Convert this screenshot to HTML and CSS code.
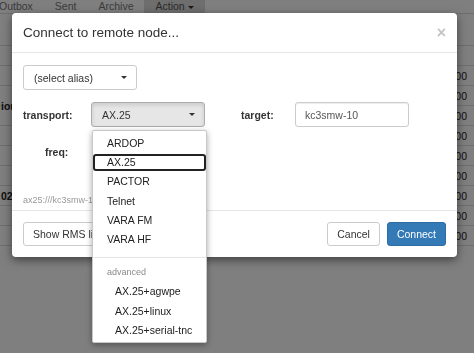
FILE: index.html
```html
<!DOCTYPE html>
<html lang="en">
<head>
    <meta charset="UTF-8">
    <meta name="viewport" content="width=device-width, initial-scale=1.0">
    <title>Connect to remote node</title>
    <link rel="stylesheet" href="styles.css">
</head>

<body>
    <div class="page">
        <ul class="tabs">
            <li>Outbox</li>
            <li>Sent</li>
            <li>Archive</li>
            <li class="active">Action <span class="caret"></span></li>
        </ul>

        <div class="rows">
            <div class="row"><span></span><span></span></div>
            <div class="row"><span></span><span></span></div>
            <div class="row"><span></span><span>0000</span></div>
            <div class="row"><span></span><span>0000</span></div>
            <div class="row"><span class="up">ion</span><span>0000</span></div>
            <div class="row"><span></span><span>0000</span></div>
            <div class="row"><span></span><span>0000</span></div>
            <div class="row"><span></span><span>0000</span></div>
            <div class="row"><span>022</span><span>0000</span></div>
            <div class="row"><span></span><span>0000</span></div>
            <div class="row"><span></span><span>0000</span></div>
        </div>
    </div>

    <div class="backdrop"></div>

    <div class="modal">
        <div class="modal-header">
            <h4>Connect to remote node...</h4>
            <button type="button" class="close">&times;</button>
        </div>

        <div class="modal-body">
            <div class="form-row">
                <button type="button" class="picker">(select alias) <span class="caret"></span></button>
            </div>

            <div class="form-row">
                <label class="lbl lbl-transport">transport:</label>
                <button type="button" class="picker open">AX.25 <span class="caret"></span></button>
                <label class="lbl lbl-target">target:</label>
                <input type="text" class="field" value="kc3smw-10">
            </div>

            <div class="form-row">
                <label class="lbl lbl-freq">freq:</label>
            </div>

            <p class="help">ax25:///kc3smw-10</p>
        </div>

        <div class="modal-footer">
            <button type="button" class="btn">Show RMS list</button>
            <span class="spacer"></span>
            <button type="button" class="btn">Cancel</button>
            <button type="button" class="btn btn-primary">Connect</button>
        </div>
    </div>

    <ul class="popup">
        <li>ARDOP</li>
        <li class="focused">AX.25</li>
        <li>PACTOR</li>
        <li>Telnet</li>
        <li>VARA FM</li>
        <li>VARA HF</li>
        <li class="divider"></li>
        <li class="group">advanced</li>
        <li class="sub">AX.25+agwpe</li>
        <li class="sub">AX.25+linux</li>
        <li class="sub">AX.25+serial-tnc</li>
    </ul>
</body>
</html>
```

FILE: styles.css
```css
* {
    box-sizing: border-box;
}

body {
    margin: 0;
    font-family: "Liberation Sans", Arial, sans-serif;
    font-size: 10.5px;
    color: #333;
    background: #fff;
    overflow: hidden;
}

/* page behind the dialog */

.tabs {
    display: flex;
    margin: 0 0 0 -12px;
    padding: 0;
    list-style: none;
    height: 14px;
    border-bottom: 1px solid #ddd;
}

.tabs li {
    padding: 1px 11px 3px;
    line-height: 10px;
    color: #777;
}

.tabs li.active {
    background: #dcdcdc;
    color: #555;
}

.rows {
    margin-top: 12px;
}

.row {
    display: flex;
    justify-content: space-between;
    height: 20px;
    line-height: 20px;
    padding: 0 7px 0 1px;
    border-bottom: 1px solid #ddd;
    color: #222;
}

.row span:first-child {
    font-weight: bold;
}

.row span.up {
    align-self: flex-start;
    line-height: 12px;
    margin-top: -6px;
}

.caret {
    display: inline-block;
    width: 0;
    height: 0;
    border-top: 3px solid #333;
    border-left: 3px solid transparent;
    border-right: 3px solid transparent;
    vertical-align: middle;
}

.backdrop {
    position: fixed;
    inset: 0;
    background: rgba(0, 0, 0, 0.5);
}

/* dialog */

.modal {
    position: absolute;
    left: 12px;
    top: 13px;
    width: 445px;
    background: #fff;
    border-radius: 4px;
    box-shadow: 0 3px 10px rgba(0, 0, 0, 0.5);
}

.modal-header {
    display: flex;
    align-items: center;
    justify-content: space-between;
    padding: 10px 11px;
    border-bottom: 1px solid #e5e5e5;
}

.modal-header h4 {
    margin: 0;
    font-size: 13.5px;
    font-weight: normal;
    line-height: 19px;
}

.close {
    padding: 0;
    margin-right: 0;
    border: 0;
    background: none;
    font-family: inherit;
    font-size: 16px;
    font-weight: bold;
    line-height: 1;
    color: #c4c4c4;
}

.modal-body {
    padding: 12px 11px 2.5px;
}

.form-row {
    display: flex;
    align-items: center;
    height: 25px;
    margin-bottom: 12px;
}

.picker {
    display: flex;
    align-items: center;
    justify-content: space-between;
    width: 114px;
    height: 25px;
    padding: 0 9px 0 10px;
    border: 1px solid #ccc;
    border-radius: 3px;
    background: #fff;
    font-family: inherit;
    font-size: 10.5px;
    color: #333;
}

.picker.open {
    background: #e6e6e6;
    border-color: #adadad;
    box-shadow: inset 0 2px 4px rgba(0, 0, 0, 0.125);
}

.lbl {
    font-weight: bold;
}

.lbl-transport {
    width: 68px;
}

.lbl-target {
    width: 54px;
    margin-left: 36px;
}

.lbl-freq {
    padding-left: 22px;
}

.field {
    width: 114px;
    height: 25px;
    padding: 0 9px;
    border: 1px solid #ccc;
    border-radius: 3px;
    box-shadow: inset 0 1px 1px rgba(0, 0, 0, 0.075);
    font-family: inherit;
    font-size: 10.5px;
    color: #555;
}

.help {
    margin: 30px 0 0;
    font-size: 9px;
    line-height: 13px;
    color: #999;
}

.modal-footer {
    display: flex;
    align-items: center;
    gap: 7px;
    padding: 11px 11px 11px;
    border-top: 1px solid #e5e5e5;
}

.spacer {
    flex: 1;
}

.btn {
    height: 24px;
    padding: 0 9px;
    border: 1px solid #ccc;
    border-radius: 3px;
    background: #fff;
    font-family: inherit;
    font-size: 10.5px;
    color: #333;
}

.btn-primary {
    background: #337ab7;
    border-color: #2e6da4;
    color: #fff;
}

/* open select list */

.popup {
    position: absolute;
    left: 92px;
    top: 130px;
    width: 115px;
    margin: 0;
    padding: 2.5px 0 2px;
    list-style: none;
    background: #fff;
    border: 1px solid #c8c8c8;
    border-radius: 2px;
    box-shadow: 0 2px 6px rgba(0, 0, 0, 0.35);
    font-size: 10.5px;
    color: #222;
}

.popup li {
    height: 19.4px;
    line-height: 19.4px;
    padding-left: 14px;
}

.popup li.focused {
    height: 17.4px;
    line-height: 17.4px;
    margin: 1px 0;
    border-radius: 3px;
    box-shadow: inset 0 0 0 2px #222;
}

.popup li.divider {
    height: 1px;
    margin: 7px 0 5px;
    padding: 0;
    background: #e5e5e5;
}

.popup li.group {
    font-size: 9px;
    color: #8a8a8a;
}

.popup li.sub {
    padding-left: 22px;
}
```
